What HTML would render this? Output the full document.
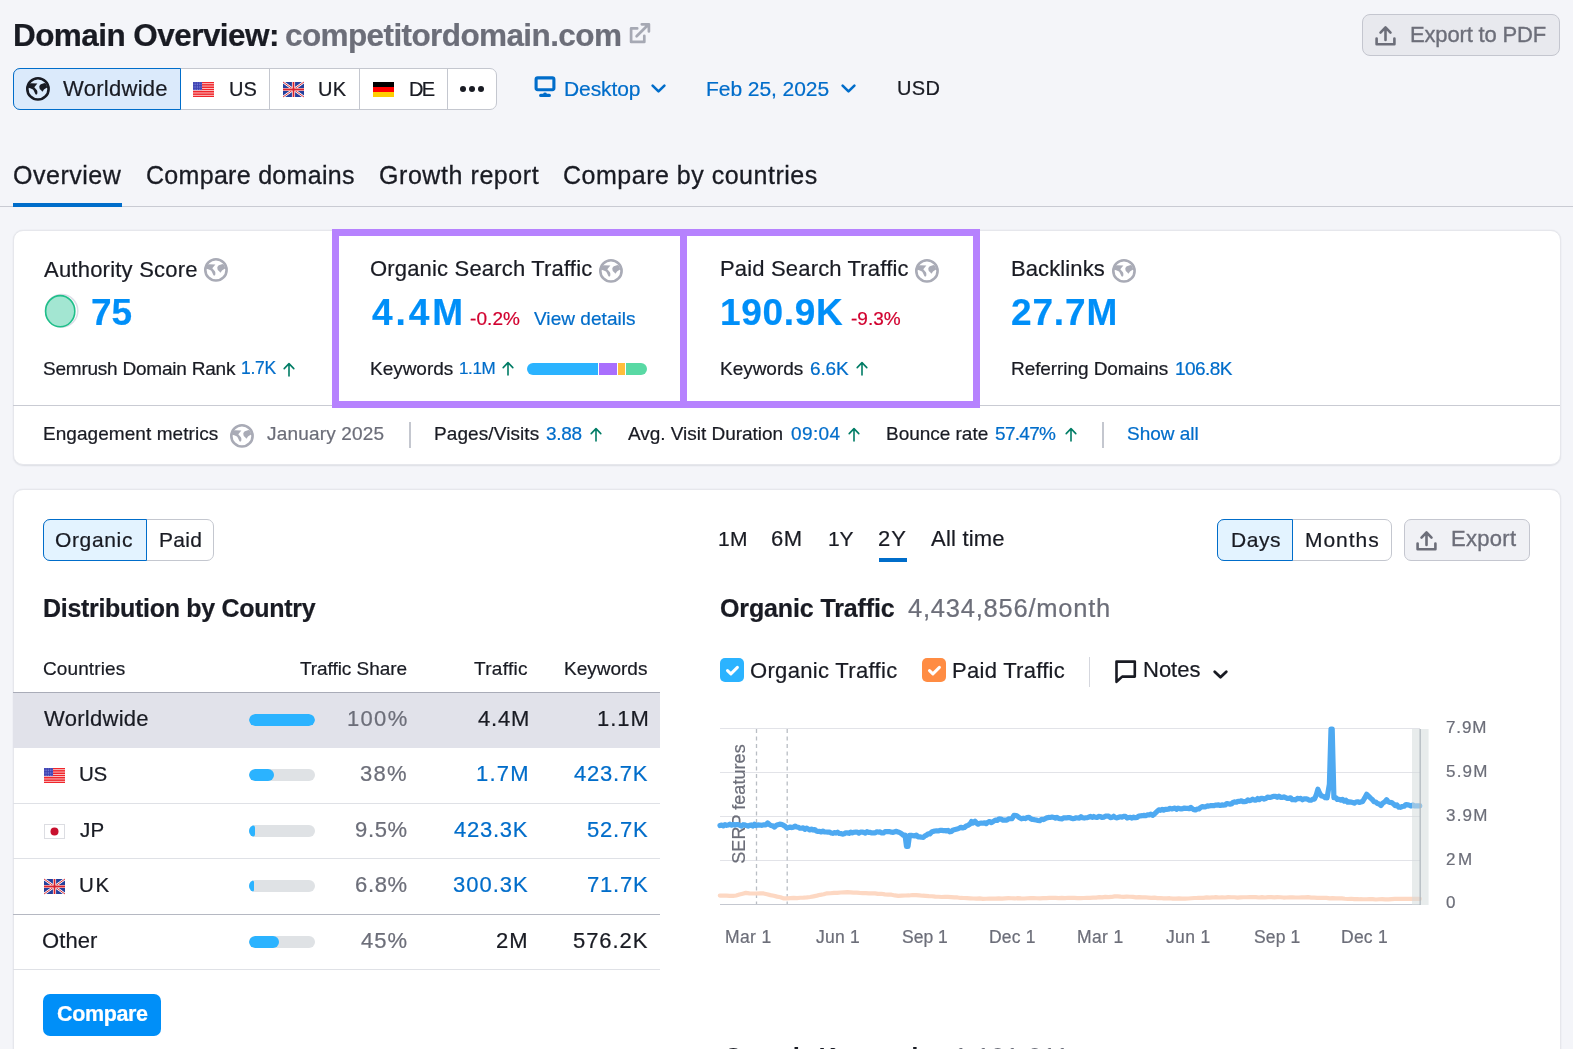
<!DOCTYPE html>
<html><head><meta charset="utf-8"><title>Domain Overview</title>
<style>
html,body{margin:0;padding:0;}
body{width:1573px;height:1049px;overflow:hidden;background:#f4f5f9;position:relative;font-family:"Liberation Sans",sans-serif;}
.t{position:absolute;white-space:nowrap;line-height:1;will-change:transform;-webkit-text-stroke-width:0.22px;}
.r{position:absolute;display:block;}
svg.r{overflow:visible;}
</style></head><body>
<div class="t" style="left:12.80px;top:19.94px;font-size:31.5px;color:#191b23;font-weight:700;letter-spacing:-0.560px;">Domain Overview:</div>
<div class="t" style="left:284.84px;top:19.94px;font-size:31.5px;color:#6c6e79;font-weight:700;letter-spacing:-0.600px;">competitordomain.com</div>
<svg class="r" style="left:629px;top:22px" width="22" height="22" viewBox="0 0 22 22"><path d="M8.2 6.4 H2.1 V19.9 H15.3 V13.8" fill="none" stroke="#a6a9b4" stroke-width="2.7" stroke-linejoin="round" stroke-linecap="round"/><path d="M7.6 14.3 L19.2 2.7 M12.8 2.3 H19.9 V9.4" fill="none" stroke="#a6a9b4" stroke-width="2.7" stroke-linecap="round" stroke-linejoin="round"/></svg>
<div class="r" style="left:1362px;top:14px;width:198px;height:42px;background:#e8e9ee;border:1px solid #c4c6cf;border-radius:8px;box-sizing:border-box;"></div>
<svg class="r" style="left:1375px;top:24.5px" width="21" height="21" viewBox="0 0 21 21"><path d="M10.5 15 V3 M5.5 7.6 L10.5 2.4 L15.5 7.6" fill="none" stroke="#6c6e79" stroke-width="2.6" stroke-linecap="round" stroke-linejoin="round"/><path d="M1.6 13.5 V19.2 H19.4 V13.5" fill="none" stroke="#6c6e79" stroke-width="2.6" stroke-linecap="round" stroke-linejoin="round"/></svg>
<div class="t" style="left:1409.56px;top:23.68px;font-size:22px;color:#6c6e79;letter-spacing:-0.163px;-webkit-text-stroke:0.35px #6c6e79;">Export to PDF</div>
<div class="r" style="left:13px;top:68px;width:484px;height:42px;background:#fff;border:1px solid #c4c7cf;border-radius:7px;box-sizing:border-box;"></div>
<div class="r" style="left:13px;top:68px;width:168px;height:42px;background:#dbeafb;border:1px solid #006dca;border-radius:7px 0 0 7px;box-sizing:border-box;"></div>
<div class="r" style="left:269px;top:69px;width:1px;height:40px;background:#c4c7cf;"></div>
<div class="r" style="left:359px;top:69px;width:1px;height:40px;background:#c4c7cf;"></div>
<div class="r" style="left:447px;top:69px;width:1px;height:40px;background:#c4c7cf;"></div>
<svg class="r" style="left:26px;top:77px" width="24" height="24" viewBox="0 0 24 24"><circle cx="11.95" cy="11.9" r="10.65" fill="none" stroke="#191b23" stroke-width="2.6"/><path d="M2.4 8.2 C3.2 7 4.2 6.4 5 6.3 L11.4 6.6 L8.3 10.3 L10.9 13.3 C11.4 14 11.5 15.4 11.3 16.4 C11.1 17.6 10.1 17.9 9.5 17.2 C8.7 15.4 8 13.6 7 12.4 C5.6 11.6 4.2 11 2.6 10.7 Z" fill="#191b23"/><path d="M13.3 9.2 C13.8 8 14.6 7.2 15.6 6.9 L18.6 6.1 C19.5 6.6 20.2 7.2 20.6 7.8 L21.1 10.4 C20 11 18.9 11.7 18 12.6 C17.4 13.3 16.9 14.2 16.3 14.7 C15.8 14.2 15.4 13.6 14.9 13.1 C14.2 12.5 13.6 11.9 13.5 11.2 Z" fill="#191b23"/></svg>
<div class="t" style="left:63.00px;top:78.18px;font-size:22px;color:#191b23;letter-spacing:0.288px;">Worldwide</div>
<svg class="r" style="left:193px;top:82px" width="21" height="15" viewBox="0 0 21 15"><rect width="21" height="15" fill="#f0262b"/><rect x="0" y="1.385" width="21" height="0.692" fill="#fff"/><rect x="0" y="3.692" width="21" height="0.692" fill="#fff"/><rect x="0" y="6.000" width="21" height="0.692" fill="#fff"/><rect x="0" y="8.308" width="21" height="0.692" fill="#fff"/><rect x="0" y="10.615" width="21" height="0.692" fill="#fff"/><rect x="0" y="12.923" width="21" height="0.692" fill="#fff"/><rect x="0" y="0" width="9.03" height="8.08" fill="#3a3fb0"/><g fill="#8d93e0"><rect x="0.60" y="0.60" width="0.9" height="0.8"/><rect x="0.60" y="2.20" width="0.9" height="0.8"/><rect x="0.60" y="3.80" width="0.9" height="0.8"/><rect x="0.60" y="5.40" width="0.9" height="0.8"/><rect x="0.60" y="7.00" width="0.9" height="0.8"/><rect x="2.35" y="0.60" width="0.9" height="0.8"/><rect x="2.35" y="2.20" width="0.9" height="0.8"/><rect x="2.35" y="3.80" width="0.9" height="0.8"/><rect x="2.35" y="5.40" width="0.9" height="0.8"/><rect x="2.35" y="7.00" width="0.9" height="0.8"/><rect x="4.10" y="0.60" width="0.9" height="0.8"/><rect x="4.10" y="2.20" width="0.9" height="0.8"/><rect x="4.10" y="3.80" width="0.9" height="0.8"/><rect x="4.10" y="5.40" width="0.9" height="0.8"/><rect x="4.10" y="7.00" width="0.9" height="0.8"/><rect x="5.85" y="0.60" width="0.9" height="0.8"/><rect x="5.85" y="2.20" width="0.9" height="0.8"/><rect x="5.85" y="3.80" width="0.9" height="0.8"/><rect x="5.85" y="5.40" width="0.9" height="0.8"/><rect x="5.85" y="7.00" width="0.9" height="0.8"/><rect x="7.60" y="0.60" width="0.9" height="0.8"/><rect x="7.60" y="2.20" width="0.9" height="0.8"/><rect x="7.60" y="3.80" width="0.9" height="0.8"/><rect x="7.60" y="5.40" width="0.9" height="0.8"/><rect x="7.60" y="7.00" width="0.9" height="0.8"/></g></svg>
<div class="t" style="left:228.60px;top:79.07px;font-size:20px;color:#191b23;letter-spacing:0.100px;">US</div>
<svg class="r" style="left:283px;top:82px" width="21" height="15" viewBox="0 0 60 42" preserveAspectRatio="none"><rect width="60" height="42" fill="#243f9c"/><path d="M0 0 L60 42 M60 0 L0 42" stroke="#fff" stroke-width="7"/><path d="M0 0 L60 42 M60 0 L0 42" stroke="#d8232f" stroke-width="2.6"/><path d="M30 0 V42 M0 21 H60" stroke="#fff" stroke-width="9"/><path d="M30 0 V42 M0 21 H60" stroke="#d8232f" stroke-width="5"/></svg>
<div class="t" style="left:318.32px;top:79.07px;font-size:20px;color:#191b23;letter-spacing:0.400px;">UK</div>
<svg class="r" style="left:373px;top:82px" width="21" height="15" viewBox="0 0 21 15"><rect width="21" height="5" fill="#000"/><rect y="5" width="21" height="5" fill="#f00"/><rect y="10" width="21" height="5" fill="#ffce00"/></svg>
<div class="t" style="left:408.60px;top:79.07px;font-size:20px;color:#191b23;letter-spacing:-1.700px;">DE</div>
<div class="r" style="left:459.9px;top:85.9px;width:6.2px;height:6.2px;border-radius:50%;background:#191b23"></div>
<div class="r" style="left:468.9px;top:85.9px;width:6.2px;height:6.2px;border-radius:50%;background:#191b23"></div>
<div class="r" style="left:477.9px;top:85.9px;width:6.2px;height:6.2px;border-radius:50%;background:#191b23"></div>
<svg class="r" style="left:534px;top:76px" width="22" height="22" viewBox="0 0 22 22"><rect x="2.1" y="1.9" width="17.8" height="11.8" rx="1.6" fill="none" stroke="#006dca" stroke-width="3.1"/><path d="M6.7 19.4 H15.3" fill="none" stroke="#006dca" stroke-width="3.2" stroke-linecap="round"/><ellipse cx="11" cy="17.9" rx="1.8" ry="1.3" fill="#006dca"/></svg>
<div class="t" style="left:563.60px;top:77.52px;font-size:21px;color:#006dca;letter-spacing:-0.096px;">Desktop</div>
<svg class="r" style="left:650.7px;top:84px" width="15" height="9" viewBox="0 0 15 9"><path d="M1.6 1.6 L7.5 7.4 L13.399999999999999 1.6" fill="none" stroke="#006dca" stroke-width="2.6" stroke-linecap="round" stroke-linejoin="round"/></svg>
<div class="t" style="left:706.32px;top:77.52px;font-size:21px;color:#006dca;letter-spacing:-0.054px;">Feb 25, 2025</div>
<svg class="r" style="left:840.5px;top:84px" width="15" height="9" viewBox="0 0 15 9"><path d="M1.6 1.6 L7.5 7.4 L13.399999999999999 1.6" fill="none" stroke="#006dca" stroke-width="2.6" stroke-linecap="round" stroke-linejoin="round"/></svg>
<div class="t" style="left:896.60px;top:78.37px;font-size:20px;color:#191b23;letter-spacing:0.375px;">USD</div>
<div class="t" style="left:12.60px;top:162.64px;font-size:25px;color:#191b23;letter-spacing:0.513px;-webkit-text-stroke:0.3px #191b23;">Overview</div>
<div class="t" style="left:145.56px;top:162.64px;font-size:25px;color:#191b23;letter-spacing:0.299px;-webkit-text-stroke:0.3px #191b23;">Compare domains</div>
<div class="t" style="left:378.60px;top:162.64px;font-size:25px;color:#191b23;letter-spacing:0.566px;-webkit-text-stroke:0.3px #191b23;">Growth report</div>
<div class="t" style="left:562.60px;top:162.64px;font-size:25px;color:#191b23;letter-spacing:0.507px;-webkit-text-stroke:0.3px #191b23;">Compare by countries</div>
<div class="r" style="left:0px;top:206px;width:1573px;height:1px;background:#c9cbd3;"></div>
<div class="r" style="left:13px;top:203px;width:109px;height:4px;background:#006dca;"></div>
<div class="r" style="left:12.5px;top:229.8px;width:1548px;height:235.6px;background:#fff;border:1px solid #e6e7ec;border-radius:10px;box-sizing:border-box;box-shadow:0 0.5px 1.5px rgba(30,40,60,0.10);"></div>
<div class="r" style="left:13px;top:405px;width:1547px;height:1px;background:#c9cbd3;"></div>
<div class="t" style="left:43.72px;top:258.68px;font-size:22px;color:#191b23;letter-spacing:0.224px;">Authority Score</div>
<svg class="r" style="left:203.8px;top:258.3px" width="24" height="24" viewBox="0 0 24 24"><circle cx="11.95" cy="11.9" r="10.65" fill="none" stroke="#a9abb6" stroke-width="2.6"/><path d="M2.4 8.2 C3.2 7 4.2 6.4 5 6.3 L11.4 6.6 L8.3 10.3 L10.9 13.3 C11.4 14 11.5 15.4 11.3 16.4 C11.1 17.6 10.1 17.9 9.5 17.2 C8.7 15.4 8 13.6 7 12.4 C5.6 11.6 4.2 11 2.6 10.7 Z" fill="#a9abb6"/><path d="M13.3 9.2 C13.8 8 14.6 7.2 15.6 6.9 L18.6 6.1 C19.5 6.6 20.2 7.2 20.6 7.8 L21.1 10.4 C20 11 18.9 11.7 18 12.6 C17.4 13.3 16.9 14.2 16.3 14.7 C15.8 14.2 15.4 13.6 14.9 13.1 C14.2 12.5 13.6 11.9 13.5 11.2 Z" fill="#a9abb6"/></svg>
<svg class="r" style="left:44px;top:294px" width="35" height="35" viewBox="0 0 35 35"><circle cx="17.6" cy="16.8" r="16.2" fill="none" stroke="#dcdde7" stroke-width="1.5"/><ellipse cx="16.2" cy="17.2" rx="14.6" ry="15.6" fill="#a3e6d2" stroke="#1fbf8a" stroke-width="1.6"/></svg>
<div class="t" style="left:91.12px;top:294.18px;font-size:37px;color:#008ff8;font-weight:700;letter-spacing:-0.163px;">75</div>
<div class="t" style="left:43.12px;top:358.92px;font-size:19px;color:#191b23;letter-spacing:-0.223px;">Semrush Domain Rank</div>
<div class="t" style="left:240.60px;top:360.19px;font-size:17.5px;color:#006dca;letter-spacing:-0.282px;">1.7K</div>
<svg class="r" style="left:283.2px;top:361.5px" width="12" height="15" viewBox="0 0 12 15"><path d="M6 14 V2 M1.2 6.6 L6 1.6 L10.8 6.6" fill="none" stroke="#007c65" stroke-width="1.6" stroke-linecap="round" stroke-linejoin="round"/></svg>
<div class="t" style="left:369.56px;top:257.88px;font-size:22px;color:#191b23;letter-spacing:0.178px;">Organic Search Traffic</div>
<svg class="r" style="left:598.8px;top:258.5px" width="24" height="24" viewBox="0 0 24 24"><circle cx="11.95" cy="11.9" r="10.65" fill="none" stroke="#a9abb6" stroke-width="2.6"/><path d="M2.4 8.2 C3.2 7 4.2 6.4 5 6.3 L11.4 6.6 L8.3 10.3 L10.9 13.3 C11.4 14 11.5 15.4 11.3 16.4 C11.1 17.6 10.1 17.9 9.5 17.2 C8.7 15.4 8 13.6 7 12.4 C5.6 11.6 4.2 11 2.6 10.7 Z" fill="#a9abb6"/><path d="M13.3 9.2 C13.8 8 14.6 7.2 15.6 6.9 L18.6 6.1 C19.5 6.6 20.2 7.2 20.6 7.8 L21.1 10.4 C20 11 18.9 11.7 18 12.6 C17.4 13.3 16.9 14.2 16.3 14.7 C15.8 14.2 15.4 13.6 14.9 13.1 C14.2 12.5 13.6 11.9 13.5 11.2 Z" fill="#a9abb6"/></svg>
<div class="t" style="left:371.52px;top:293.88px;font-size:37px;color:#008ff8;font-weight:700;letter-spacing:2.936px;">4.4M</div>
<div class="t" style="left:470.00px;top:308.72px;font-size:19px;color:#d1002f;letter-spacing:0.091px;">-0.2%</div>
<div class="t" style="left:534.20px;top:308.72px;font-size:19px;color:#006dca;letter-spacing:0.044px;">View details</div>
<div class="t" style="left:369.56px;top:358.62px;font-size:19px;color:#191b23;letter-spacing:-0.030px;">Keywords</div>
<div class="t" style="left:459.40px;top:360.31px;font-size:17px;color:#006dca;letter-spacing:-0.394px;">1.1M</div>
<svg class="r" style="left:502px;top:361px" width="12" height="15" viewBox="0 0 12 15"><path d="M6 14 V2 M1.2 6.6 L6 1.6 L10.8 6.6" fill="none" stroke="#007c65" stroke-width="1.6" stroke-linecap="round" stroke-linejoin="round"/></svg>
<div class="r" style="left:527px;top:363px;width:120px;height:12px;border-radius:6px;overflow:hidden;background:#fff"><div class="r" style="left:0;top:0;width:70.6px;height:12px;background:#2bb3ff"></div><div class="r" style="left:72.3px;top:0;width:17.4px;height:12px;background:#a96ffd"></div><div class="r" style="left:91px;top:0;width:7px;height:12px;background:#ffbe3b"></div><div class="r" style="left:99.2px;top:0;width:21px;height:12px;background:#59d9a4"></div></div>
<div class="t" style="left:720.40px;top:258.18px;font-size:22px;color:#191b23;letter-spacing:0.168px;">Paid Search Traffic</div>
<svg class="r" style="left:915px;top:258.5px" width="24" height="24" viewBox="0 0 24 24"><circle cx="11.95" cy="11.9" r="10.65" fill="none" stroke="#a9abb6" stroke-width="2.6"/><path d="M2.4 8.2 C3.2 7 4.2 6.4 5 6.3 L11.4 6.6 L8.3 10.3 L10.9 13.3 C11.4 14 11.5 15.4 11.3 16.4 C11.1 17.6 10.1 17.9 9.5 17.2 C8.7 15.4 8 13.6 7 12.4 C5.6 11.6 4.2 11 2.6 10.7 Z" fill="#a9abb6"/><path d="M13.3 9.2 C13.8 8 14.6 7.2 15.6 6.9 L18.6 6.1 C19.5 6.6 20.2 7.2 20.6 7.8 L21.1 10.4 C20 11 18.9 11.7 18 12.6 C17.4 13.3 16.9 14.2 16.3 14.7 C15.8 14.2 15.4 13.6 14.9 13.1 C14.2 12.5 13.6 11.9 13.5 11.2 Z" fill="#a9abb6"/></svg>
<div class="t" style="left:719.50px;top:293.98px;font-size:37px;color:#008ff8;font-weight:700;letter-spacing:0.695px;">190.9K</div>
<div class="t" style="left:850.52px;top:308.72px;font-size:19px;color:#d1002f;letter-spacing:0.031px;">-9.3%</div>
<div class="t" style="left:720.40px;top:358.62px;font-size:19px;color:#191b23;letter-spacing:-0.030px;">Keywords</div>
<div class="t" style="left:809.60px;top:358.62px;font-size:19px;color:#006dca;letter-spacing:-0.124px;">6.6K</div>
<svg class="r" style="left:856.3px;top:361px" width="12" height="15" viewBox="0 0 12 15"><path d="M6 14 V2 M1.2 6.6 L6 1.6 L10.8 6.6" fill="none" stroke="#007c65" stroke-width="1.6" stroke-linecap="round" stroke-linejoin="round"/></svg>
<div class="t" style="left:1011.28px;top:258.18px;font-size:22px;color:#191b23;letter-spacing:0.103px;">Backlinks</div>
<svg class="r" style="left:1112px;top:258.5px" width="24" height="24" viewBox="0 0 24 24"><circle cx="11.95" cy="11.9" r="10.65" fill="none" stroke="#a9abb6" stroke-width="2.6"/><path d="M2.4 8.2 C3.2 7 4.2 6.4 5 6.3 L11.4 6.6 L8.3 10.3 L10.9 13.3 C11.4 14 11.5 15.4 11.3 16.4 C11.1 17.6 10.1 17.9 9.5 17.2 C8.7 15.4 8 13.6 7 12.4 C5.6 11.6 4.2 11 2.6 10.7 Z" fill="#a9abb6"/><path d="M13.3 9.2 C13.8 8 14.6 7.2 15.6 6.9 L18.6 6.1 C19.5 6.6 20.2 7.2 20.6 7.8 L21.1 10.4 C20 11 18.9 11.7 18 12.6 C17.4 13.3 16.9 14.2 16.3 14.7 C15.8 14.2 15.4 13.6 14.9 13.1 C14.2 12.5 13.6 11.9 13.5 11.2 Z" fill="#a9abb6"/></svg>
<div class="t" style="left:1011.28px;top:293.98px;font-size:37px;color:#008ff8;font-weight:700;letter-spacing:0.845px;">27.7M</div>
<div class="t" style="left:1011.28px;top:358.62px;font-size:19px;color:#191b23;letter-spacing:-0.076px;">Referring Domains</div>
<div class="t" style="left:1174.60px;top:358.62px;font-size:19px;color:#006dca;letter-spacing:-0.566px;">106.8K</div>
<div class="r" style="left:332px;top:229px;width:648px;height:179px;border:7px solid #b682fe;box-sizing:border-box;"></div>
<div class="r" style="left:680px;top:229px;width:7px;height:179px;background:#b682fe;"></div>
<div class="t" style="left:42.60px;top:424.42px;font-size:19px;color:#191b23;letter-spacing:0.057px;">Engagement metrics</div>
<svg class="r" style="left:230px;top:424px" width="24" height="24" viewBox="0 0 24 24"><circle cx="11.95" cy="11.9" r="10.65" fill="none" stroke="#a9abb6" stroke-width="2.6"/><path d="M2.4 8.2 C3.2 7 4.2 6.4 5 6.3 L11.4 6.6 L8.3 10.3 L10.9 13.3 C11.4 14 11.5 15.4 11.3 16.4 C11.1 17.6 10.1 17.9 9.5 17.2 C8.7 15.4 8 13.6 7 12.4 C5.6 11.6 4.2 11 2.6 10.7 Z" fill="#a9abb6"/><path d="M13.3 9.2 C13.8 8 14.6 7.2 15.6 6.9 L18.6 6.1 C19.5 6.6 20.2 7.2 20.6 7.8 L21.1 10.4 C20 11 18.9 11.7 18 12.6 C17.4 13.3 16.9 14.2 16.3 14.7 C15.8 14.2 15.4 13.6 14.9 13.1 C14.2 12.5 13.6 11.9 13.5 11.2 Z" fill="#a9abb6"/></svg>
<div class="t" style="left:267.28px;top:424.42px;font-size:19px;color:#6c6e79;letter-spacing:0.180px;">January 2025</div>
<div class="r" style="left:409px;top:422px;width:2px;height:26px;background:#c4c7cf;"></div>
<div class="t" style="left:433.60px;top:424.42px;font-size:19px;color:#191b23;letter-spacing:0.093px;">Pages/Visits</div>
<div class="t" style="left:545.52px;top:424.42px;font-size:19px;color:#006dca;letter-spacing:-0.334px;">3.88</div>
<svg class="r" style="left:590px;top:427px" width="12" height="15" viewBox="0 0 12 15"><path d="M6 14 V2 M1.2 6.6 L6 1.6 L10.8 6.6" fill="none" stroke="#007c65" stroke-width="1.6" stroke-linecap="round" stroke-linejoin="round"/></svg>
<div class="t" style="left:628.00px;top:424.42px;font-size:19px;color:#191b23;letter-spacing:-0.027px;">Avg. Visit Duration</div>
<div class="t" style="left:790.56px;top:424.42px;font-size:19px;color:#006dca;letter-spacing:0.373px;">09:04</div>
<svg class="r" style="left:848px;top:427px" width="12" height="15" viewBox="0 0 12 15"><path d="M6 14 V2 M1.2 6.6 L6 1.6 L10.8 6.6" fill="none" stroke="#007c65" stroke-width="1.6" stroke-linecap="round" stroke-linejoin="round"/></svg>
<div class="t" style="left:885.64px;top:424.42px;font-size:19px;color:#191b23;letter-spacing:-0.026px;">Bounce rate</div>
<div class="t" style="left:995.00px;top:424.42px;font-size:19px;color:#006dca;letter-spacing:-0.691px;">57.47%</div>
<svg class="r" style="left:1065px;top:427px" width="12" height="15" viewBox="0 0 12 15"><path d="M6 14 V2 M1.2 6.6 L6 1.6 L10.8 6.6" fill="none" stroke="#007c65" stroke-width="1.6" stroke-linecap="round" stroke-linejoin="round"/></svg>
<div class="r" style="left:1102px;top:422px;width:2px;height:26px;background:#c4c7cf;"></div>
<div class="t" style="left:1127.32px;top:424.42px;font-size:19px;color:#006dca;">Show all</div>
<div class="r" style="left:12.5px;top:488.5px;width:1548px;height:700px;background:#fff;border:1px solid #e6e7ec;border-radius:10px;box-sizing:border-box;box-shadow:0 0.5px 1.5px rgba(30,40,60,0.10);"></div>
<div class="r" style="left:43px;top:519px;width:171px;height:42px;background:#fff;border:1px solid #c4c7cf;border-radius:7px;box-sizing:border-box;"></div>
<div class="r" style="left:43px;top:519px;width:104px;height:42px;background:#e3f3ff;border:1px solid #006dca;border-radius:7px 0 0 7px;box-sizing:border-box;"></div>
<div class="t" style="left:55.28px;top:529.22px;font-size:21px;color:#191b23;letter-spacing:0.648px;">Organic</div>
<div class="t" style="left:158.64px;top:529.22px;font-size:21px;color:#191b23;letter-spacing:0.329px;">Paid</div>
<div class="t" style="left:43.12px;top:596.14px;font-size:25px;color:#191b23;font-weight:700;letter-spacing:-0.299px;">Distribution by Country</div>
<div class="t" style="left:43.12px;top:658.52px;font-size:19px;color:#191b23;letter-spacing:0.110px;">Countries</div>
<div class="t" style="left:300.24px;top:658.52px;font-size:19px;color:#191b23;letter-spacing:-0.061px;">Traffic Share</div>
<div class="t" style="left:474.28px;top:658.52px;font-size:19px;color:#191b23;letter-spacing:0.299px;">Traffic</div>
<div class="t" style="left:563.56px;top:658.52px;font-size:19px;color:#191b23;">Keywords</div>
<div class="r" style="left:13px;top:691.8px;width:647px;height:1.2px;background:#a9acb8;"></div>
<div class="r" style="left:13px;top:693px;width:647px;height:55px;background:#e1e2ea;"></div>
<div class="t" style="left:43.72px;top:708.38px;font-size:22px;color:#191b23;letter-spacing:0.288px;">Worldwide</div>
<div class="r" style="left:249px;top:714px;width:66px;height:12px;border-radius:6px;overflow:hidden;background:#dfe2e5"><div class="r" style="left:0;top:0;width:66px;height:12px;border-radius:6px;background:#2bb3ff"></div></div>
<div class="t" style="left:346.56px;top:708.38px;font-size:22px;color:#6c6e79;letter-spacing:1.325px;">100%</div>
<div class="t" style="left:477.52px;top:708.38px;font-size:22px;color:#191b23;letter-spacing:0.768px;">4.4M</div>
<div class="t" style="left:597.40px;top:708.38px;font-size:22px;color:#191b23;letter-spacing:0.995px;">1.1M</div>
<svg class="r" style="left:44px;top:768.0px" width="21" height="15" viewBox="0 0 21 15"><rect width="21" height="15" fill="#f0262b"/><rect x="0" y="1.385" width="21" height="0.692" fill="#fff"/><rect x="0" y="3.692" width="21" height="0.692" fill="#fff"/><rect x="0" y="6.000" width="21" height="0.692" fill="#fff"/><rect x="0" y="8.308" width="21" height="0.692" fill="#fff"/><rect x="0" y="10.615" width="21" height="0.692" fill="#fff"/><rect x="0" y="12.923" width="21" height="0.692" fill="#fff"/><rect x="0" y="0" width="9.03" height="8.08" fill="#3a3fb0"/><g fill="#8d93e0"><rect x="0.60" y="0.60" width="0.9" height="0.8"/><rect x="0.60" y="2.20" width="0.9" height="0.8"/><rect x="0.60" y="3.80" width="0.9" height="0.8"/><rect x="0.60" y="5.40" width="0.9" height="0.8"/><rect x="0.60" y="7.00" width="0.9" height="0.8"/><rect x="2.35" y="0.60" width="0.9" height="0.8"/><rect x="2.35" y="2.20" width="0.9" height="0.8"/><rect x="2.35" y="3.80" width="0.9" height="0.8"/><rect x="2.35" y="5.40" width="0.9" height="0.8"/><rect x="2.35" y="7.00" width="0.9" height="0.8"/><rect x="4.10" y="0.60" width="0.9" height="0.8"/><rect x="4.10" y="2.20" width="0.9" height="0.8"/><rect x="4.10" y="3.80" width="0.9" height="0.8"/><rect x="4.10" y="5.40" width="0.9" height="0.8"/><rect x="4.10" y="7.00" width="0.9" height="0.8"/><rect x="5.85" y="0.60" width="0.9" height="0.8"/><rect x="5.85" y="2.20" width="0.9" height="0.8"/><rect x="5.85" y="3.80" width="0.9" height="0.8"/><rect x="5.85" y="5.40" width="0.9" height="0.8"/><rect x="5.85" y="7.00" width="0.9" height="0.8"/><rect x="7.60" y="0.60" width="0.9" height="0.8"/><rect x="7.60" y="2.20" width="0.9" height="0.8"/><rect x="7.60" y="3.80" width="0.9" height="0.8"/><rect x="7.60" y="5.40" width="0.9" height="0.8"/><rect x="7.60" y="7.00" width="0.9" height="0.8"/></g></svg>
<div class="t" style="left:79.40px;top:764.25px;font-size:20.5px;color:#191b23;letter-spacing:-0.395px;">US</div>
<div class="r" style="left:249px;top:769.0px;width:66px;height:12px;border-radius:6px;overflow:hidden;background:#dfe2e5"><div class="r" style="left:0;top:0;width:25px;height:12px;border-radius:6px;background:#2bb3ff"></div></div>
<div class="t" style="left:360.08px;top:762.98px;font-size:22px;color:#6c6e79;letter-spacing:1.272px;">38%</div>
<div class="t" style="left:476.12px;top:762.98px;font-size:22px;color:#006dca;letter-spacing:1.235px;">1.7M</div>
<div class="t" style="left:574.00px;top:762.98px;font-size:22px;color:#006dca;letter-spacing:0.748px;">423.7K</div>
<svg class="r" style="left:44px;top:823.6999999999999px" width="21" height="15" viewBox="0 0 21 15"><rect x="0.5" y="0.5" width="20" height="14" fill="#fff" stroke="#dcdde2" stroke-width="1"/><circle cx="10.5" cy="7.5" r="4" fill="#c8102e"/></svg>
<div class="t" style="left:80.00px;top:819.95px;font-size:20.5px;color:#191b23;letter-spacing:0.166px;">JP</div>
<div class="r" style="left:249px;top:824.6999999999999px;width:66px;height:12px;border-radius:6px;overflow:hidden;background:#dfe2e5"><div class="r" style="left:0;top:0;width:6px;height:12px;border-radius:6px;background:#2bb3ff"></div></div>
<div class="t" style="left:354.60px;top:818.68px;font-size:22px;color:#6c6e79;letter-spacing:0.680px;">9.5%</div>
<div class="t" style="left:454.00px;top:818.68px;font-size:22px;color:#006dca;letter-spacing:0.756px;">423.3K</div>
<div class="t" style="left:587.40px;top:818.68px;font-size:22px;color:#006dca;letter-spacing:0.801px;">52.7K</div>
<svg class="r" style="left:44px;top:878.6px" width="21" height="15" viewBox="0 0 60 42" preserveAspectRatio="none"><rect width="60" height="42" fill="#243f9c"/><path d="M0 0 L60 42 M60 0 L0 42" stroke="#fff" stroke-width="7"/><path d="M0 0 L60 42 M60 0 L0 42" stroke="#d8232f" stroke-width="2.6"/><path d="M30 0 V42 M0 21 H60" stroke="#fff" stroke-width="9"/><path d="M30 0 V42 M0 21 H60" stroke="#d8232f" stroke-width="5"/></svg>
<div class="t" style="left:79.40px;top:874.85px;font-size:20.5px;color:#191b23;letter-spacing:1.605px;">UK</div>
<div class="r" style="left:249px;top:879.6px;width:66px;height:12px;border-radius:6px;overflow:hidden;background:#dfe2e5"><div class="r" style="left:0;top:0;width:4.5px;height:12px;border-radius:6px;background:#2bb3ff"></div></div>
<div class="t" style="left:354.60px;top:873.58px;font-size:22px;color:#6c6e79;letter-spacing:0.680px;">6.8%</div>
<div class="t" style="left:453.40px;top:873.58px;font-size:22px;color:#006dca;letter-spacing:0.996px;">300.3K</div>
<div class="t" style="left:587.40px;top:873.58px;font-size:22px;color:#006dca;letter-spacing:0.801px;">71.7K</div>
<div class="t" style="left:42.36px;top:929.78px;font-size:22px;color:#191b23;letter-spacing:0.100px;">Other</div>
<div class="r" style="left:249px;top:935.8px;width:66px;height:12px;border-radius:6px;overflow:hidden;background:#dfe2e5"><div class="r" style="left:0;top:0;width:30px;height:12px;border-radius:6px;background:#2bb3ff"></div></div>
<div class="t" style="left:361.28px;top:929.78px;font-size:22px;color:#6c6e79;letter-spacing:1.032px;">45%</div>
<div class="t" style="left:495.64px;top:929.78px;font-size:22px;color:#191b23;letter-spacing:1.120px;">2M</div>
<div class="t" style="left:573.08px;top:929.78px;font-size:22px;color:#191b23;letter-spacing:0.932px;">576.2K</div>
<div class="r" style="left:13px;top:803px;width:647px;height:1px;background:#dfe1e6;"></div>
<div class="r" style="left:13px;top:858px;width:647px;height:1px;background:#dfe1e6;"></div>
<div class="r" style="left:13px;top:914px;width:647px;height:1px;background:#b5b8c2;"></div>
<div class="r" style="left:13px;top:969px;width:647px;height:1px;background:#dfe1e6;"></div>
<div class="r" style="left:43px;top:994px;width:118px;height:42px;background:#008ff8;border-radius:7px;"></div>
<div class="t" style="left:56.56px;top:1003.60px;font-size:21.5px;color:#fff;font-weight:700;letter-spacing:-0.360px;">Compare</div>
<div class="t" style="left:718.08px;top:528.12px;font-size:21px;color:#191b23;letter-spacing:0.310px;">1M</div>
<div class="t" style="left:771.28px;top:528.48px;font-size:22px;color:#191b23;letter-spacing:0.520px;">6M</div>
<div class="t" style="left:828.40px;top:528.12px;font-size:21px;color:#191b23;letter-spacing:-0.273px;">1Y</div>
<div class="t" style="left:878.28px;top:528.48px;font-size:22px;color:#191b23;letter-spacing:1.005px;">2Y</div>
<div class="t" style="left:931.24px;top:528.48px;font-size:22px;color:#191b23;letter-spacing:0.208px;">All time</div>
<div class="r" style="left:879px;top:558px;width:28px;height:4px;background:#006dca;"></div>
<div class="r" style="left:1217px;top:519px;width:175px;height:42px;background:#fff;border:1px solid #c4c7cf;border-radius:7px;box-sizing:border-box;"></div>
<div class="r" style="left:1217px;top:519px;width:76px;height:42px;background:#e3f3ff;border:1px solid #006dca;border-radius:7px 0 0 7px;box-sizing:border-box;"></div>
<div class="t" style="left:1230.64px;top:529.22px;font-size:21px;color:#191b23;letter-spacing:0.551px;">Days</div>
<div class="t" style="left:1304.60px;top:529.22px;font-size:21px;color:#191b23;letter-spacing:0.968px;">Months</div>
<div class="r" style="left:1404px;top:519px;width:126px;height:42px;background:#f0f1f5;border:1px solid #c4c6cf;border-radius:7px;box-sizing:border-box;"></div>
<svg class="r" style="left:1416.3px;top:529.5px" width="21" height="21" viewBox="0 0 21 21"><path d="M10.5 15 V3 M5.5 7.6 L10.5 2.4 L15.5 7.6" fill="none" stroke="#6c6e79" stroke-width="2.6" stroke-linecap="round" stroke-linejoin="round"/><path d="M1.6 13.5 V19.2 H19.4 V13.5" fill="none" stroke="#6c6e79" stroke-width="2.6" stroke-linecap="round" stroke-linejoin="round"/></svg>
<div class="t" style="left:1451.40px;top:528.18px;font-size:22px;color:#6c6e79;letter-spacing:0.300px;-webkit-text-stroke:0.35px #6c6e79;">Export</div>
<div class="t" style="left:719.84px;top:596.44px;font-size:25px;color:#191b23;font-weight:700;letter-spacing:-0.126px;">Organic Traffic</div>
<div class="t" style="left:907.76px;top:596.01px;font-size:25.5px;color:#6c6e79;letter-spacing:0.776px;">4,434,856/month</div>
<svg class="r" style="left:720px;top:658px" width="24" height="24" viewBox="0 0 24 24"><rect width="24" height="24" rx="5" fill="#2bb3ff"/><path d="M7.5 12.6 L10.9 15.9 L17.4 9.4" fill="none" stroke="#fff" stroke-width="3" stroke-linecap="round" stroke-linejoin="round"/></svg>
<div class="t" style="left:749.56px;top:660.38px;font-size:22px;color:#191b23;letter-spacing:0.324px;">Organic Traffic</div>
<svg class="r" style="left:922px;top:658px" width="24" height="24" viewBox="0 0 24 24"><rect width="24" height="24" rx="5" fill="#ff8c43"/><path d="M7.5 12.6 L10.9 15.9 L17.4 9.4" fill="none" stroke="#fff" stroke-width="3" stroke-linecap="round" stroke-linejoin="round"/></svg>
<div class="t" style="left:951.64px;top:660.38px;font-size:22px;color:#191b23;letter-spacing:0.277px;">Paid Traffic</div>
<div class="r" style="left:1089px;top:657px;width:1px;height:30px;background:#d5d7de;"></div>
<svg class="r" style="left:1115px;top:660px" width="22" height="24" viewBox="0 0 22 24"><path d="M1.5 21.8 V1.6 H19.8 V16.6 H7.2 L1.5 21.8Z" fill="none" stroke="#191b23" stroke-width="2.6" stroke-linejoin="round"/></svg>
<div class="t" style="left:1143.32px;top:659.38px;font-size:22px;color:#191b23;letter-spacing:-0.009px;">Notes</div>
<svg class="r" style="left:1212.7px;top:669.5px" width="15" height="9" viewBox="0 0 15 9"><path d="M1.7 1.7 L7.5 7.3 L13.299999999999999 1.7" fill="none" stroke="#191b23" stroke-width="2.8" stroke-linecap="round" stroke-linejoin="round"/></svg>
<div class="r" style="left:720px;top:728px;width:700px;height:1.3px;background:#e2e3e8;"></div>
<div class="r" style="left:720px;top:772px;width:700px;height:1.3px;background:#e2e3e8;"></div>
<div class="r" style="left:720px;top:816px;width:700px;height:1.3px;background:#e2e3e8;"></div>
<div class="r" style="left:720px;top:860px;width:700px;height:1.3px;background:#e2e3e8;"></div>
<div class="r" style="left:720px;top:903.8px;width:700px;height:1.5px;background:#c5c8d0;"></div>
<svg class="r" style="left:0;top:0" width="1573" height="1049" viewBox="0 0 1573 1049"><line x1="756.5" y1="729" x2="756.5" y2="904" stroke="#b9bec4" stroke-width="1.3" stroke-dasharray="4 3.5"/><line x1="787.2" y1="729" x2="787.2" y2="904" stroke="#b9bec4" stroke-width="1.3" stroke-dasharray="4 3.5"/></svg>
<div class="t" style="left:678.6px;top:793px;width:120px;height:22px;line-height:22px;font-size:18px;color:#6c6e79;transform:rotate(-90deg);text-align:center;letter-spacing:0.05px">SERP features</div>
<svg class="r" style="left:0;top:0" width="1573" height="1049" viewBox="0 0 1573 1049"><polyline points="719.80,895.55 723.10,895.65 726.40,895.63 729.70,895.79 733.00,895.89 736.20,895.47 739.40,894.48 742.60,893.68 745.80,892.89 749.36,893.37 752.92,893.49 756.48,893.49 760.04,893.39 763.60,893.47 766.98,894.26 770.37,895.11 773.75,895.73 777.13,896.64 780.52,897.31 783.90,898.43 787.17,898.36 790.44,898.08 793.71,897.86 796.99,898.15 800.26,897.75 803.53,897.70 806.80,897.45 810.18,896.96 813.57,896.32 816.95,895.65 820.33,894.82 823.72,894.29 827.10,893.35 830.50,893.27 833.90,892.96 837.30,892.90 840.70,892.50 844.10,892.28 847.50,892.20 850.55,892.30 853.60,892.60 856.65,892.70 859.70,892.95 862.75,893.03 865.80,893.19 868.85,893.40 871.90,893.28 874.95,893.38 878.00,893.84 881.38,893.76 884.77,894.38 888.15,894.67 891.53,894.71 894.92,895.43 898.30,895.80 901.86,895.56 905.42,895.52 908.98,895.46 912.54,895.02 916.10,895.11 919.29,895.33 922.48,895.72 925.66,895.93 928.85,896.16 932.04,896.27 935.23,896.65 938.41,896.77 941.60,897.00 944.77,896.91 947.95,896.97 951.12,897.17 954.30,897.43 957.48,897.45 960.65,897.97 963.83,897.98 967.00,898.16 970.18,898.31 973.35,898.49 976.53,898.54 979.70,898.45 982.88,898.82 986.06,898.76 989.24,898.61 992.42,898.59 995.61,898.62 998.79,898.30 1001.97,898.60 1005.15,898.33 1008.33,898.21 1011.51,898.27 1014.69,898.47 1017.88,898.18 1021.06,898.41 1024.24,898.50 1027.42,898.23 1030.60,898.14 1033.73,898.17 1036.85,898.26 1039.98,898.29 1043.11,898.20 1046.23,898.19 1049.36,897.89 1052.48,897.91 1055.61,897.95 1058.74,898.18 1061.86,897.94 1064.99,898.06 1068.12,897.77 1071.24,897.78 1074.37,897.86 1077.49,898.05 1080.62,898.04 1083.75,898.02 1086.87,897.81 1090.00,897.91 1093.07,897.72 1096.13,897.55 1099.20,897.21 1102.27,897.43 1105.33,896.92 1108.40,897.14 1111.47,896.95 1114.53,896.33 1117.60,896.38 1120.67,896.67 1123.73,896.86 1126.80,896.72 1129.87,896.74 1132.93,896.83 1136.00,897.31 1139.07,897.06 1142.13,897.36 1145.20,897.25 1148.27,897.55 1151.33,897.88 1154.40,897.59 1157.47,898.05 1160.53,898.00 1163.60,898.31 1166.67,898.33 1169.73,898.21 1172.80,898.66 1175.87,898.56 1178.93,898.45 1182.00,898.55 1185.08,898.65 1188.16,898.48 1191.24,898.25 1194.32,898.02 1197.40,897.97 1200.48,897.81 1203.56,897.92 1206.64,897.35 1209.72,897.58 1212.80,897.47 1215.87,897.11 1218.95,897.51 1222.02,897.41 1225.09,897.50 1228.17,897.19 1231.24,897.24 1234.31,897.25 1237.39,897.55 1240.46,897.34 1243.53,897.23 1246.61,897.26 1249.68,897.19 1252.75,897.07 1255.83,897.10 1258.90,897.47 1261.97,897.19 1265.05,897.52 1268.12,897.17 1271.19,897.18 1274.27,897.31 1277.34,897.14 1280.41,897.24 1283.49,897.53 1286.56,897.49 1289.63,897.46 1292.71,897.37 1295.78,897.51 1298.85,897.52 1301.93,897.32 1305.00,897.41 1308.07,897.18 1311.14,897.63 1314.21,897.59 1317.28,897.85 1320.35,897.90 1323.42,897.82 1326.49,897.81 1329.56,898.35 1332.63,898.06 1335.70,898.34 1338.77,898.38 1341.84,898.46 1344.91,898.78 1347.98,899.01 1351.05,898.76 1354.12,899.06 1357.19,898.99 1360.26,899.22 1363.33,899.24 1366.40,899.23 1369.55,899.20 1372.71,899.18 1375.86,899.50 1379.01,899.26 1382.16,899.08 1385.32,899.39 1388.47,899.40 1391.62,899.09 1394.78,898.90 1397.93,898.89 1401.08,898.81 1404.24,898.90 1407.39,898.74 1410.54,898.78 1413.69,898.75 1416.85,898.87 1420.00,898.80" fill="none" stroke="#fdd8c3" stroke-width="4.2" stroke-linejoin="round" stroke-linecap="round"/><polyline points="720.00,825.48 721.67,825.04 723.33,825.81 725.00,824.63 726.67,825.33 728.33,824.89 730.00,824.20 731.67,825.10 733.33,824.33 735.00,825.13 736.67,824.56 738.33,824.68 740.00,825.36 741.60,826.04 743.20,824.72 744.80,824.85 746.40,825.53 748.00,826.06 749.60,825.34 751.20,824.96 752.80,825.96 754.40,824.23 756.00,825.65 758.00,824.95 760.00,825.03 762.00,825.31 763.87,824.82 765.73,824.90 767.60,822.93 769.33,824.52 771.05,825.50 772.77,825.90 774.50,827.09 776.23,825.46 777.95,824.71 779.67,824.22 781.40,824.32 783.27,825.20 785.13,826.33 787.00,828.15 788.60,827.62 790.20,827.04 791.80,827.63 793.40,827.16 795.00,826.04 796.64,826.96 798.29,827.20 799.93,828.16 801.57,828.23 803.21,827.76 804.86,829.34 806.50,828.11 808.14,828.97 809.79,829.89 811.43,829.12 813.07,830.04 814.71,829.54 816.36,830.99 818.00,831.48 819.64,831.30 821.27,832.00 822.91,831.16 824.54,832.01 826.18,831.99 827.81,832.13 829.45,832.07 831.09,832.93 832.72,833.28 834.36,832.60 835.99,833.10 837.63,832.18 839.26,833.50 840.90,833.56 842.53,834.14 844.17,833.77 845.80,832.76 847.43,832.88 849.07,833.34 850.70,832.13 852.33,832.86 853.97,832.28 855.60,832.14 857.23,831.98 858.87,833.21 860.50,832.00 862.13,832.16 863.77,832.37 865.40,833.18 867.03,831.71 868.67,832.32 870.30,832.45 871.93,832.99 873.57,832.83 875.20,832.86 876.84,831.80 878.47,832.05 880.11,831.95 881.74,832.89 883.38,833.02 885.01,831.57 886.65,831.62 888.29,831.72 889.92,831.72 891.56,832.17 893.19,832.36 894.83,831.77 896.46,831.31 898.10,832.05 899.83,832.66 901.55,833.72 903.27,835.12 905.00,835.00 906.50,846.40 908.00,846.40 909.50,835.34 911.23,835.25 912.95,835.66 914.67,835.99 916.40,835.10 918.12,836.84 919.85,836.85 921.57,837.25 923.30,837.34 924.93,835.85 926.56,835.10 928.19,833.81 929.81,834.01 931.44,832.23 933.07,831.48 934.70,830.98 936.47,830.79 938.23,831.01 940.00,830.39 941.63,830.30 943.26,830.57 944.89,830.48 946.51,830.95 948.14,830.35 949.77,831.87 951.40,831.41 953.30,829.92 955.20,829.45 957.10,828.98 959.00,828.36 960.80,827.28 962.60,827.95 964.40,827.57 966.20,825.98 968.00,825.40 970.00,824.00 971.50,821.50 973.00,823.00 975.00,821.20 977.00,823.50 978.10,824.17 979.70,823.24 981.30,823.05 982.90,823.27 984.50,822.91 986.10,823.71 987.70,822.29 989.60,821.52 991.50,822.67 993.40,821.39 995.30,820.18 997.20,820.38 999.10,818.80 1001.00,819.05 1002.93,820.09 1004.87,820.12 1006.80,820.05 1008.53,818.90 1010.27,818.73 1012.00,818.60 1014.00,815.30 1016.50,815.50 1019.50,817.80 1021.40,818.77 1023.30,818.22 1025.20,818.54 1027.10,817.61 1029.00,817.30 1030.80,818.78 1032.60,819.51 1034.40,819.68 1036.20,820.02 1038.00,820.46 1039.80,820.73 1041.55,819.41 1043.30,819.53 1045.05,818.84 1046.80,817.85 1048.55,817.45 1050.30,817.50 1052.05,817.07 1053.80,817.45 1055.40,818.11 1057.00,817.38 1058.60,818.44 1060.20,818.72 1061.80,818.85 1063.40,817.97 1065.00,817.90 1066.60,817.82 1068.20,817.67 1069.80,817.60 1071.40,818.26 1073.00,818.67 1074.60,818.47 1076.20,817.73 1077.80,817.96 1079.40,818.13 1081.00,816.75 1082.60,817.70 1084.20,818.06 1085.80,817.74 1087.40,817.59 1089.00,817.01 1090.60,816.38 1092.20,817.39 1093.80,816.48 1095.40,817.23 1097.00,817.45 1098.67,816.44 1100.34,816.49 1102.00,817.50 1103.67,817.13 1105.34,816.17 1107.01,816.12 1108.68,816.19 1110.35,817.58 1112.01,817.44 1113.68,816.28 1115.35,817.54 1117.02,817.85 1118.69,817.30 1120.35,816.78 1122.02,817.16 1123.69,816.44 1125.36,816.27 1127.03,818.02 1128.70,817.47 1130.36,817.28 1132.03,818.05 1133.70,817.18 1135.42,817.72 1137.13,817.39 1138.85,816.03 1140.57,815.85 1142.28,815.68 1144.00,815.33 1145.72,815.71 1147.43,814.87 1149.15,814.90 1150.87,814.14 1152.58,815.29 1154.30,814.04 1156.55,811.92 1158.80,809.85 1160.40,810.35 1162.01,809.40 1163.62,810.21 1165.22,809.38 1166.83,809.36 1168.43,809.26 1170.04,808.27 1171.64,808.95 1173.25,808.41 1174.85,808.01 1176.45,809.36 1178.06,808.15 1179.66,808.61 1181.27,808.99 1182.88,808.60 1184.48,808.11 1186.09,808.37 1187.69,808.36 1189.30,808.69 1190.90,807.39 1193.20,809.36 1195.50,809.95 1197.20,809.02 1198.90,808.94 1200.60,807.49 1202.30,806.61 1203.94,806.80 1205.57,806.91 1207.21,805.90 1208.84,806.05 1210.48,805.69 1212.11,805.54 1213.75,805.70 1215.39,805.10 1217.02,805.08 1218.66,804.82 1220.29,805.49 1221.93,804.89 1223.56,805.04 1225.20,805.00 1226.82,803.50 1228.44,803.78 1230.05,804.20 1231.67,803.75 1233.29,802.22 1234.91,801.93 1236.52,802.24 1238.14,801.31 1239.76,801.35 1241.38,800.78 1242.99,801.59 1244.61,801.53 1246.23,801.47 1247.85,799.87 1249.46,800.62 1251.08,800.25 1252.70,799.06 1254.34,800.17 1255.97,800.11 1257.61,798.55 1259.24,799.66 1260.88,798.45 1262.51,798.39 1264.15,799.08 1265.79,798.58 1267.42,797.16 1269.06,797.43 1270.69,797.37 1272.33,796.84 1273.96,796.37 1275.60,796.37 1277.26,797.31 1278.93,796.25 1280.59,797.42 1282.25,797.43 1283.92,796.88 1285.58,797.65 1287.25,798.39 1288.91,798.39 1290.57,797.80 1292.24,799.66 1293.90,799.52 1295.62,799.91 1297.33,798.41 1299.05,798.75 1300.77,798.40 1302.48,799.79 1304.20,798.94 1305.92,798.74 1307.63,799.33 1309.35,800.27 1311.07,800.16 1312.78,799.21 1314.50,799.07 1316.20,795.15 1317.90,789.23 1319.60,793.26 1321.30,795.96 1323.23,796.27 1325.17,797.77 1327.10,797.80 1329.40,784.10 1331.00,729.00 1332.20,729.00 1333.90,797.67 1335.62,797.49 1337.34,799.51 1339.06,799.42 1340.78,800.18 1342.50,799.35 1344.22,801.20 1345.94,800.24 1347.66,802.13 1349.38,801.86 1351.10,802.11 1352.73,802.50 1354.36,803.17 1355.99,801.98 1357.61,801.73 1359.24,802.45 1360.87,801.93 1362.50,801.70 1364.60,798.14 1366.70,794.29 1368.53,796.11 1370.35,797.86 1372.17,799.40 1374.00,801.77 1375.72,802.05 1377.45,803.55 1379.18,804.10 1380.90,805.52 1382.80,803.20 1384.70,801.88 1386.60,799.73 1388.31,801.87 1390.02,802.39 1391.74,802.59 1393.45,803.95 1395.16,805.63 1396.88,804.99 1398.59,807.12 1400.30,807.28 1402.20,806.49 1404.10,806.20 1406.00,804.51 1407.72,804.85 1409.45,805.31 1411.17,805.98 1412.90,804.97 1414.62,805.99 1416.35,805.90 1418.08,805.91 1419.80,805.80" fill="none" stroke="#4ea9f1" stroke-width="5.2" stroke-linejoin="round" stroke-linecap="round"/><rect x="1412" y="729" width="16.6" height="176" fill="#d5dcdc" fill-opacity="0.55"/><rect x="1419.6" y="729" width="1.1" height="176" fill="#a9b1b8"/></svg>
<div class="t" style="left:1445.56px;top:719.01px;font-size:17px;color:#6c6e79;letter-spacing:0.886px;">7.9M</div>
<div class="t" style="left:1445.56px;top:763.31px;font-size:17px;color:#6c6e79;letter-spacing:1.206px;">5.9M</div>
<div class="t" style="left:1445.56px;top:807.31px;font-size:17px;color:#6c6e79;letter-spacing:1.206px;">3.9M</div>
<div class="t" style="left:1445.56px;top:851.01px;font-size:17px;color:#6c6e79;letter-spacing:2.470px;">2M</div>
<div class="t" style="left:1445.56px;top:894.11px;font-size:17px;color:#6c6e79;">0</div>
<div class="t" style="left:725.36px;top:929.19px;font-size:17.5px;color:#6c6e79;letter-spacing:0.372px;">Mar 1</div>
<div class="t" style="left:815.76px;top:929.19px;font-size:17.5px;color:#6c6e79;letter-spacing:0.252px;">Jun 1</div>
<div class="t" style="left:902.32px;top:929.19px;font-size:17.5px;color:#6c6e79;letter-spacing:-0.010px;">Sep 1</div>
<div class="t" style="left:989.32px;top:929.19px;font-size:17.5px;color:#6c6e79;letter-spacing:0.180px;">Dec 1</div>
<div class="t" style="left:1076.60px;top:929.19px;font-size:17.5px;color:#6c6e79;letter-spacing:0.372px;">Mar 1</div>
<div class="t" style="left:1166.44px;top:929.19px;font-size:17.5px;color:#6c6e79;letter-spacing:0.372px;">Jun 1</div>
<div class="t" style="left:1254.12px;top:929.19px;font-size:17.5px;color:#6c6e79;letter-spacing:0.130px;">Sep 1</div>
<div class="t" style="left:1340.84px;top:929.19px;font-size:17.5px;color:#6c6e79;letter-spacing:0.250px;">Dec 1</div>
<div class="t" style="left:724.32px;top:1044.88px;font-size:24px;color:#191b23;font-weight:700;letter-spacing:-0.327px;">Organic Keywords</div>
<div class="t" style="left:954.40px;top:1044.88px;font-size:24px;color:#6c6e79;letter-spacing:1.225px;">1,101,011</div>
</body></html>
